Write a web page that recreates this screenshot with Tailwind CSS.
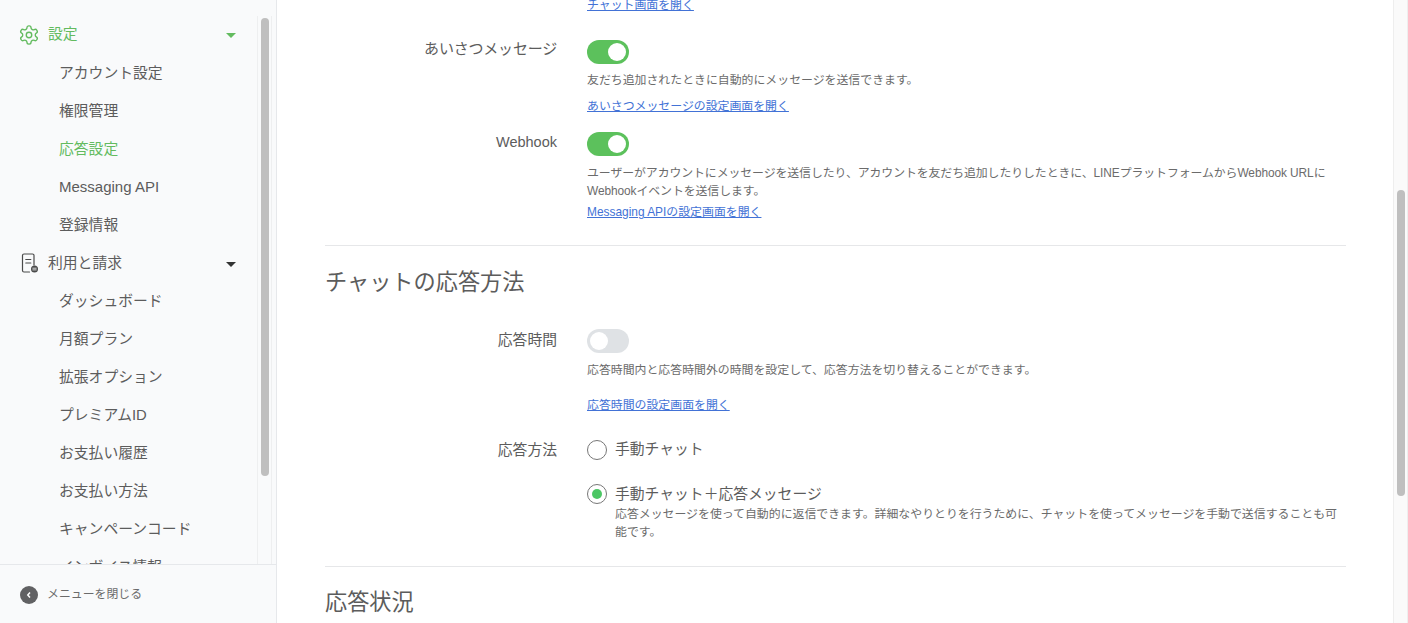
<!DOCTYPE html>
<html lang="ja">
<head>
  <meta charset="UTF-8">
  <title>応答設定</title>
  <script src="https://cdn.jsdelivr.net/npm/@tailwindcss/browser@4"></script>
</head>
<body class="h-[623px] overflow-hidden bg-white text-[#5c5c5c] font-['Liberation_Sans','Noto_Sans_CJK_JP',sans-serif]">
<div class="flex h-[623px]">

  <!-- Sidebar -->
  <aside class="flex h-full w-[277px] shrink-0 flex-col border-r border-[#e6e8eb] bg-[#f9fafb]">
    <div class="relative h-[564px] overflow-hidden">
      <nav class="pt-[15px] pl-5 text-[14.8px] leading-[38px]">
        <div class="mb-px flex w-[216px] items-center text-[#63bb5f]">
          <svg class="mt-[2px] mr-2 -ml-[2px] h-[22px] w-[22px]" viewBox="0 0 24 24" fill="none" stroke="currentColor" stroke-width="1.5" stroke-linecap="round" stroke-linejoin="round"><circle cx="12" cy="12" r="3"/><path d="M12.220 2h-.44a2 2 0 0 0-2 2v.18a2 2 0 0 1-1 1.730l-.43.25a2 2 0 0 1-2 0l-.15-.08a2 2 0 0 0-2.730.73l-.22.38a2 2 0 0 0 .73 2.730l.15.1a2 2 0 0 1 1 1.720v.51a2 2 0 0 1-1 1.740l-.15.09a2 2 0 0 0-.73 2.730l.22.38a2 2 0 0 0 2.730.73l.15-.08a2 2 0 0 1 2 0l.43.25a2 2 0 0 1 1 1.730V20a2 2 0 0 0 2 2h.44a2 2 0 0 0 2-2v-.18a2 2 0 0 1 1-1.730l.43-.25a2 2 0 0 1 2 0l.15.08a2 2 0 0 0 2.730-.73l.22-.39a2 2 0 0 0-.73-2.730l-.15-.08a2 2 0 0 1-1-1.740v-.5a2 2 0 0 1 1-1.740l.15-.09a2 2 0 0 0 .73-2.730l-.22-.38a2 2 0 0 0-2.730-.73l-.15.08a2 2 0 0 1-2 0l-.43-.25a2 2 0 0 1-1-1.730V4a2 2 0 0 0-2-2z"/></svg>
          <span>設定</span>
          <span class="mt-[2px] ml-auto h-0 w-0 border-x-[5px] border-t-[5px] border-x-transparent border-t-[#63bb5f]"></span>
        </div>
        <a class="block pl-[39px]">アカウント設定</a>
        <a class="block pl-[39px]">権限管理</a>
        <a class="block pl-[39px] text-[#63bb5f]">応答設定</a>
        <a class="block pl-[39px] text-[15px]">Messaging API</a>
        <a class="block pl-[39px]">登録情報</a>
        <div class="flex w-[216px] items-center">
          <svg class="mr-[9px] h-5 w-[19px]" viewBox="0 0 19 20" fill="none" stroke="#4a4a4a" stroke-width="1.200" stroke-linecap="round" stroke-linejoin="round"><path d="M9.500 19H4a1.500 1.500 0 0 1-1.500-1.500V2.500A1.500 1.500 0 0 1 4 1h8.500A1.500 1.500 0 0 1 14 2.500V12"/><path d="M5.800 6.500h5M5.800 10h5"/><circle cx="14.500" cy="16" r="3.500" fill="#4a4a4a" stroke="none"/><path d="M12.800 15.200h3.400M12.800 16.900h3.400" stroke="#f9fafb" stroke-width=".8"/></svg>
          <span>利用と請求</span>
          <span class="mt-[2px] ml-auto h-0 w-0 border-x-[5px] border-t-[5px] border-x-transparent border-t-[#333]"></span>
        </div>
        <a class="block pl-[39px]">ダッシュボード</a>
        <a class="block pl-[39px]">月額プラン</a>
        <a class="block pl-[39px]">拡張オプション</a>
        <a class="block pl-[39px]">プレミアムID</a>
        <a class="block pl-[39px]">お支払い履歴</a>
        <a class="block pl-[39px]">お支払い方法</a>
        <a class="block pl-[39px]">キャンペーンコード</a>
        <a class="block pl-[39px]">インボイス情報</a>
      </nav>
      <!-- sidebar scrollbar -->
      <div class="absolute top-[16px] bottom-0 left-[257px] w-[15px] border-x border-[#eeeff0]">
        <div class="absolute top-[2px] left-[3px] h-[458px] w-[8px] rounded bg-[#bfbfbf]"></div>
      </div>
    </div>
    <div class="flex flex-1 items-center border-t border-[#e6e8eb] pt-[2px] pl-5 text-[11.9px] text-[#6b6b6b]">
      <span class="mr-[9px] flex h-[18px] w-[18px] items-center justify-center rounded-full bg-[#616163]">
        <svg class="h-2 w-2" viewBox="0 0 8 8" fill="none" stroke="#fff" stroke-width="1.500"><path d="M5 1.500 2.800 4 5 6.500"/></svg>
      </span>
      メニューを閉じる
    </div>
  </aside>

  <!-- Main -->
  <main class="min-w-0 flex-1 overflow-hidden">
    <div class="-mt-[4px] ml-[48px] w-[1021px]">
      <a class="ml-[262px] block text-[11.9px] leading-[18px] text-[#4272d6] underline">チャット画面を開く</a>

      <div class="mt-[26px] flex">
        <div class="w-[232px] text-right text-[15px] leading-[18px] tracking-[-0.2px]">あいさつメッセージ</div>
        <div class="ml-[30px] flex-1">
          <div class="flex h-6 w-[42px] justify-end rounded-full bg-[#5cc15c] p-[3px]"><span class="h-[18px] w-[18px] rounded-full bg-white"></span></div>
          <p class="mt-[7px] text-[11.9px] leading-[18px] text-[#6b6b6b]">友だち追加されたときに自動的にメッセージを送信できます。</p>
          <a class="mt-2 block text-[11.9px] leading-[18px] text-[#4272d6] underline">あいさつメッセージの設定画面を開く</a>
        </div>
      </div>

      <div class="mt-[17px] flex">
        <div class="w-[232px] text-right text-[14.5px] leading-5">Webhook</div>
        <div class="ml-[30px] flex-1">
          <div class="flex h-6 w-[42px] justify-end rounded-full bg-[#5cc15c] p-[3px]"><span class="h-[18px] w-[18px] rounded-full bg-white"></span></div>
          <p class="mt-2 text-[11.9px] leading-[18px] tracking-[-0.08px] text-[#6b6b6b]">ユーザーがアカウントにメッセージを送信したり、アカウントを友だち追加したりしたときに、LINEプラットフォームからWebhook URLに<br>Webhookイベントを送信します。</p>
          <a class="mt-[3px] block text-[11.9px] leading-[18px] text-[#4272d6] underline">Messaging APIの設定画面を開く</a>
        </div>
      </div>

      <hr class="mt-6 border-[#e6e7e9]">

      <h2 class="mt-[22px] text-[22.2px] leading-[30px] font-normal">チャットの応答方法</h2>

      <div class="mt-[31px] flex">
        <div class="w-[232px] text-right text-[14.8px] leading-[22px]">応答時間</div>
        <div class="ml-[30px] flex-1">
          <div class="flex h-6 w-[42px] justify-start rounded-full bg-[#dfe2e5] p-[3px]"><span class="h-[18px] w-[18px] rounded-full bg-white"></span></div>
          <p class="mt-2 text-[11.9px] leading-[18px] text-[#6b6b6b]">応答時間内と応答時間外の時間を設定して、応答方法を切り替えることができます。</p>
          <a class="mt-[17px] block text-[11.9px] leading-[18px] text-[#4272d6] underline">応答時間の設定画面を開く</a>
        </div>
      </div>

      <div class="mt-[26px] flex">
        <div class="w-[232px] text-right text-[14.8px] leading-5">応答方法</div>
        <div class="ml-[30px] flex-1">
          <label class="flex">
            <span class="h-5 w-5 rounded-full border border-[#777] bg-white"></span>
            <span class="ml-2 text-[14.8px] leading-[18px]">手動チャット</span>
          </label>
          <div class="mt-[24px] flex">
            <span class="flex h-5 w-5 shrink-0 items-center justify-center rounded-full border border-[#777] bg-white"><span class="h-[10px] w-[10px] rounded-full bg-[#4cc764]"></span></span>
            <div class="ml-2">
              <div class="text-[14.8px] leading-5">手動チャット＋応答メッセージ</div>
              <p class="mt-[1px] text-[11.9px] leading-[18px] text-[#6b6b6b]">応答メッセージを使って自動的に返信できます。詳細なやりとりを行うために、チャットを使ってメッセージを手動で送信することも可能です。</p>
            </div>
          </div>
        </div>
      </div>

      <hr class="mt-[25px] border-[#e6e7e9]">

      <h2 class="mt-[21px] text-[22.2px] leading-[30px] font-normal">応答状況</h2>
    </div>
  </main>

  <!-- Page scrollbar -->
  <div class="relative h-full w-[15px] shrink-0 border-x border-[#eeeeee] bg-[#fafafa]">
    <div class="absolute top-[190px] left-[3px] h-[306px] w-[8px] rounded bg-[#bfbfbf]"></div>
  </div>
</div>
</body>
</html>
